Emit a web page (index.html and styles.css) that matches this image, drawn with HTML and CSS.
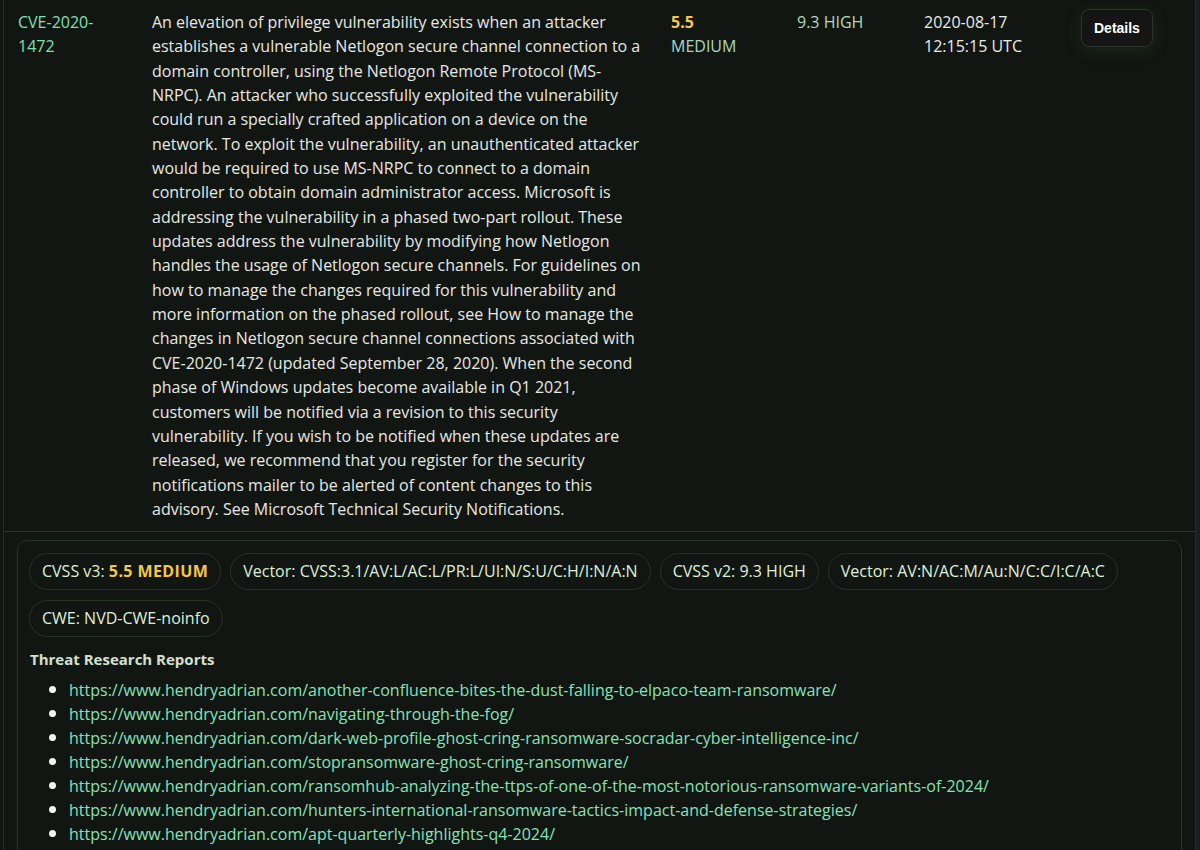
FILE: index.html
```html
<!DOCTYPE html>
<html lang="en">
<head>
    <meta charset="UTF-8">
    <meta name="viewport" content="width=device-width, initial-scale=1.0">
    <title>CVE Feed</title>
    <link rel="stylesheet" href="styles.css">
</head>
<body>
    <div class="page">
        <div class="cve-table">
            <div class="cve-row">
                <div class="cell cve-id">CVE-2020-1472</div>
                <div class="cell cve-desc">An elevation of privilege vulnerability exists when an attacker establishes a vulnerable Netlogon secure channel connection to a domain controller, using the Netlogon Remote Protocol (MS-NRPC). An attacker who successfully exploited the vulnerability could run a specially crafted application on a device on the network. To exploit the vulnerability, an unauthenticated attacker would be required to use MS-NRPC to connect to a domain controller to obtain domain administrator access. Microsoft is addressing the vulnerability in a phased two-part rollout. These updates address the vulnerability by modifying how Netlogon handles the usage of Netlogon secure channels. For guidelines on how to manage the changes required for this vulnerability and more information on the phased rollout, see How to manage the changes in Netlogon secure channel connections associated with CVE-2020-1472 (updated September 28, 2020). When the second phase of Windows updates become available in Q1 2021, customers will be notified via a revision to this security vulnerability. If you wish to be notified when these updates are released, we recommend that you register for the security notifications mailer to be alerted of content changes to this advisory. See Microsoft Technical Security Notifications.</div>
                <div class="cell cvss3">
                    <span class="score">5.5</span>
                    <span class="severity">MEDIUM</span>
                </div>
                <div class="cell cvss2">9.3 HIGH</div>
                <div class="cell published">2020-08-17 12:15:15 UTC</div>
                <div class="cell actions">
                    <button class="details-btn">Details</button>
                </div>
            </div>

            <div class="cve-expanded">
                <div class="detail-card">
                    <div class="chips">
                        <span class="chip">CVSS v3: <b class="sev-medium">5.5 MEDIUM</b></span>
                        <span class="chip">Vector: CVSS:3.1/AV:L/AC:L/PR:L/UI:N/S:U/C:H/I:N/A:N</span>
                        <span class="chip">CVSS v2: 9.3 HIGH</span>
                        <span class="chip">Vector: AV:N/AC:M/Au:N/C:C/I:C/A:C</span>
                        <span class="chip">CWE: NVD-CWE-noinfo</span>
                    </div>
                    <h4 class="reports-title">Threat Research Reports</h4>
                    <ul class="reports">
                        <li><a href="#">https://www.hendryadrian.com/another-confluence-bites-the-dust-falling-to-elpaco-team-ransomware/</a></li>
                        <li><a href="#">https://www.hendryadrian.com/navigating-through-the-fog/</a></li>
                        <li><a href="#">https://www.hendryadrian.com/dark-web-profile-ghost-cring-ransomware-socradar-cyber-intelligence-inc/</a></li>
                        <li><a href="#">https://www.hendryadrian.com/stopransomware-ghost-cring-ransomware/</a></li>
                        <li><a href="#">https://www.hendryadrian.com/ransomhub-analyzing-the-ttps-of-one-of-the-most-notorious-ransomware-variants-of-2024/</a></li>
                        <li><a href="#">https://www.hendryadrian.com/hunters-international-ransomware-tactics-impact-and-defense-strategies/</a></li>
                        <li><a href="#">https://www.hendryadrian.com/apt-quarterly-highlights-q4-2024/</a></li>
                    </ul>
                </div>
            </div>
        </div>
    </div>
</body>
</html>
```
FILE: styles.css
```css
html, body {
    margin: 0;
    padding: 0;
    background: #1e1d21;
}
body {
    font-family: "Open Sans", sans-serif;
    font-size: 16px;
    line-height: 24px;
    color: #e6e8e3;
}
.page {
    width: 1193px;
    padding-left: 3px;
    background: #121612;
    min-height: 850px;
}
.cve-table {
    border-left: 1px solid #243024;
    border-right: 1px solid #243024;
    min-height: 850px;
}
.cve-row {
    display: grid;
    grid-template-columns: 134px 519px 126px 127px 157px 1fr;
    padding: 10px 0 10px 14px;
    border-bottom: 1px solid #26362a;
}
.cell {
    padding-right: 16px;
}
.cve-id {
    color: #7fe0b0;
    padding-right: 40px;
}
.cve-desc {
    padding-right: 23px;
    line-height: 24.35px;
}
.cvss3 .score {
    display: block;
    color: #f6c744;
    font-weight: 700;
}
.cvss3 .severity {
    display: block;
    color: #a8d6c2;
}
.cvss2 {
    color: #b5d8b3;
}
.published {
    color: #ebebe6;
}
.details-btn {
    margin-top: -1px;
    padding: 0 12px;
    height: 38px;
    font-family: "Liberation Sans", Arial, sans-serif;
    font-size: 14px;
    font-weight: 700;
    color: #ffffff;
    background: #141514;
    border: 1px solid #29362a;
    border-radius: 8px;
    box-shadow: 0 4px 16px rgba(70, 130, 40, 0.18);
    cursor: pointer;
}
.cve-expanded {
    padding: 8px 13px 0 13px;
}
.detail-card {
    border: 1px solid #263526;
    border-radius: 10px;
    padding: 12px 11px 40px 11px;
}
.chips {
    display: flex;
    flex-wrap: wrap;
    gap: 10px 9px;
}
.chip {
    display: inline-block;
    padding: 5px 12px 6px 12px;
    border: 1px solid #273327;
    border-radius: 19px;
    color: #dff0d8;
    white-space: nowrap;
}
.sev-medium {
    color: #f6c744;
    font-weight: 700;
    letter-spacing: 0.4px;
}
.reports-title {
    margin: 10px 0 0 1px;
    font-size: 15px;
    font-weight: 700;
    color: #d4e0cc;
}
.reports {
    margin: 7px 0 0 0;
    padding-left: 40px;
    list-style: none;
}
.reports li::before {
    content: "";
    display: inline-block;
    width: 7px;
    height: 7px;
    margin-left: -20px;
    margin-right: 13px;
    border-radius: 50%;
    background: #f2f2f2;
    vertical-align: middle;
    position: relative;
    top: -2px;
}
.reports a {
    color: #86e2b8;
    text-decoration: none;
}
```
